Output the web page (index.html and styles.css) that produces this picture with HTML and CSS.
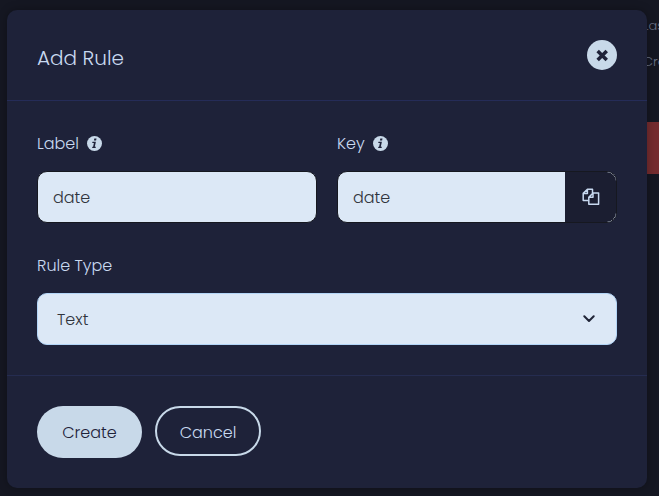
FILE: index.html
```html
<!DOCTYPE html>
<html lang="en">
<head>
<meta charset="utf-8">
<title>Add Rule</title>
<link rel="stylesheet" href="styles.css">
</head>
<body>
<div class="backdrop">
  <span class="meta meta-last">Las</span>
  <span class="meta meta-created">Cre</span>
  <div class="danger"></div>
</div>
<main class="modal">
  <header class="modal-header">
    <h1>Add Rule</h1>
    <button class="close" aria-label="Close">
      <svg width="30" height="30" viewBox="0 0 30 30"><path d="M11.9 12.2 18.5 18.8M18.5 12.2 11.9 18.8" stroke="#1e2239" stroke-width="3.5" stroke-linecap="square"/></svg>
    </button>
  </header>
  <section class="modal-body">
    <div class="row">
      <div class="field">
        <div class="label"><span>Label</span>
          <svg class="info" viewBox="0 0 15 15"><circle cx="7.5" cy="7.5" r="7.5" fill="#c8d9e9"/><path d="M7.3 2.6h2.2l-.4 2H6.9zM5.5 5.7h3.4L7.8 10.7h1.1l-.3 1.4H5.1l.3-1.4h.7l.8-3.6H5.2z" fill="#1e2239"/></svg>
        </div>
        <div class="input"><span>date</span></div>
      </div>
      <div class="field">
        <div class="label"><span>Key</span>
          <svg class="info" viewBox="0 0 15 15"><circle cx="7.5" cy="7.5" r="7.5" fill="#c8d9e9"/><path d="M7.3 2.6h2.2l-.4 2H6.9zM5.5 5.7h3.4L7.8 10.7h1.1l-.3 1.4H5.1l.3-1.4h.7l.8-3.6H5.2z" fill="#1e2239"/></svg>
        </div>
        <div class="input key-input"><span>date</span>
          <button class="copy" aria-label="Copy">
            <svg width="18" height="18" viewBox="0 0 18 18" fill="none" stroke="#c8d9f0" stroke-width="1.5" stroke-linejoin="round"><path d="M6.8 12.4H1.2V5.4L5.4 1.2h5.1v3.9M5.4 1.2v4.2H1.2M11 5.1h5.6v11.2H6.8V9.3zM11 5.1v4.2H6.8"/></svg>
          </button>
        </div>
      </div>
    </div>
    <div class="label rule-label"><span>Rule Type</span></div>
    <div class="select"><span>Text</span>
      <svg width="12" height="8" viewBox="0 0 12 8" fill="none" stroke="#202437" stroke-width="2" stroke-linecap="round" stroke-linejoin="round"><path d="M1.3 1.3 6 6l4.7-4.7"/></svg>
    </div>
  </section>
  <footer class="modal-footer">
    <button class="btn create">Create</button>
    <button class="btn cancel">Cancel</button>
  </footer>
</main>
</body>
</html>
```
FILE: styles.css
```css
* { box-sizing: border-box; }
body {
  margin: 0;
  width: 659px;
  height: 496px;
  overflow: hidden;
  background: #151722;
  padding: 10px 12px 8px 7px;
  font: 300 16px/24px Poppins, Inter, sans-serif;
  color: #c8d9f0;
}
button { font: inherit; padding: 0; border: 0; cursor: pointer; }
.backdrop { position: absolute; inset: 0; overflow: hidden; }
.meta { position: absolute; font-size: 13px; line-height: 20px; color: #6a7388; }
.meta-last { left: 643px; top: 16px; }
.meta-created { left: 643px; top: 52px; }
.danger { position: absolute; left: 640px; right: 0; top: 122px; height: 52px; background: #752c2f; }
.modal {
  position: relative;
  width: 640px;
  height: 478px;
  border-radius: 10px;
  background: #1e2239;
  box-shadow: 0 0 10px rgba(0, 0, 0, .3);
}
.modal-header {
  display: flex;
  justify-content: space-between;
  align-items: center;
  height: 91px;
  padding: 0 30px;
  border-bottom: 1px solid #252c58;
}
h1 { margin: 6px 0 0; font-size: 20px; line-height: 30px; font-weight: 300; }
.close { width: 30px; height: 30px; border-radius: 50%; background: #c8d9e9; }
.close svg { display: block; }
.modal-body { height: 275px; padding: 30px 30px 0; border-bottom: 1px solid #252c50; }
.row { display: grid; grid-template-columns: 280px 280px; gap: 20px; }
.label { display: flex; align-items: center; gap: 8px; height: 24px; margin-bottom: 16px; }
.label span, .input span, .select span { padding-top: 2px; }
.info { width: 15px; height: 15px; margin-top: 1px; }
.input {
  display: flex;
  align-items: center;
  height: 52px;
  padding-left: 15px;
  border: 1px solid #161820;
  border-radius: 10px;
  background: #dce8f6;
  color: #30343c;
  overflow: hidden;
}
.key-input { justify-content: space-between; }
.copy { display: flex; align-items: center; justify-content: center; width: 51px; height: 50px; background: #1b1e31; border-radius: 0 9px 9px 0; }
.rule-label { margin-top: 30px; }
.select {
  display: flex;
  align-items: center;
  justify-content: space-between;
  height: 52px;
  padding: 0 21px 0 19px;
  border: 1px solid #b3d5f7;
  border-radius: 10px;
  background: #dce8f6;
  color: #30343c;
}
.modal-footer { display: flex; align-items: flex-start; gap: 13px; padding: 30px 30px 0; }
.btn { height: 52px; width: 105px; padding-top: 2px; border-radius: 26px; background: #c8d9e9; color: #1e2239; }
.cancel { height: 50px; width: 106px; padding-top: 4px; border: 2px solid #c8d9e9; background: none; color: #c8d9f0; }
```
